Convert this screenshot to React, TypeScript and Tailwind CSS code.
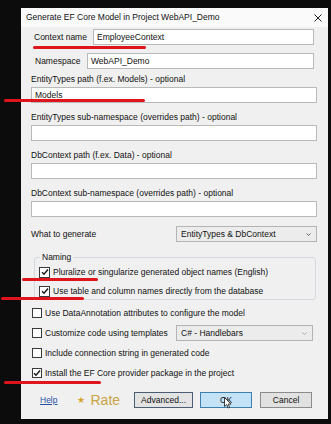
import React from "react";

const font = { fontFamily: '"Liberation Sans", Arial, sans-serif' };

function Input({ value, className = "" }: { value?: string; className?: string }) {
  return (
    <div className={`h-[16px] bg-white border border-[#b9b9b9] flex items-center pl-[3px] text-[8.5px] text-[#111] ${className}`}>
      {value}
    </div>
  );
}

function Check({ checked, size = 10 }: { checked?: boolean; size?: number }) {
  return (
    <div
      className={`${size === 11 ? "w-[11px] h-[11px]" : "w-[10px] h-[10px]"} shrink-0 bg-white border border-[#3a3a3a] flex items-center justify-center`}
    >
      {checked && (
        <svg width="8" height="8" viewBox="0 0 8 8">
          <path d="M1 4.2 L3 6.3 L7 1.5" fill="none" stroke="#1a1a1a" strokeWidth="1.4" />
        </svg>
      )}
    </div>
  );
}

function Select({ value, className = "", disabled }: { value: string; className?: string; disabled?: boolean }) {
  return (
    <div
      className={`h-[16px] border border-[#b4b4b4] bg-[#ececec] flex items-center justify-between pl-[4px] pr-[5px] text-[8.5px] text-[#111] ${className}`}
    >
      <span>{value}</span>
      <svg width="5" height="3" viewBox="0 0 5 3">
        <path d="M0.5 0.5 L2.5 2.5 L4.5 0.5" fill="none" stroke={disabled ? "#a0a0a0" : "#555"} strokeWidth="0.9" />
      </svg>
    </div>
  );
}

function Field({ label }: { label: string }) {
  return (
    <div className="flex flex-col mt-[9px]">
      <div className="h-[10px] leading-[10px] text-[8.5px] text-[#111]">{label}</div>
      <Input className="mt-[3px]" />
    </div>
  );
}

function Red({ className }: { className: string }) {
  return <div className={`absolute h-[3px] rounded-full bg-[#e0141c] ${className}`} />;
}

export default function App() {
  return (
    <div className="relative w-[331px] h-[424px] overflow-hidden bg-[#0c0c0c] pt-[8px] pl-[21px]" style={font}>
      <div className="w-[307px] h-[411px] bg-[#f0f0f0] flex flex-col">
        {/* title bar */}
        <div className="h-[19px] bg-[#fafafa] flex items-center justify-between pl-[5px] pr-[6px]">
          <span className="text-[8.5px] text-[#111]">Generate EF Core Model in Project WebAPI_Demo</span>
          <svg width="8" height="8" viewBox="0 0 8 8">
            <path d="M0.5 0.5 L7.5 7.5 M7.5 0.5 L0.5 7.5" stroke="#222" strokeWidth="1" />
          </svg>
        </div>

        <div className="flex flex-col pl-[10px] pr-[11px]">
          {/* Context name */}
          <div className="mt-[2px] flex items-center">
            <div className="ml-[3px] w-[59px] text-[8.5px] text-[#111]">Context name</div>
            <Input value="EmployeeContext" className="flex-1 mr-[3px]" />
          </div>
          {/* Namespace */}
          <div className="mt-[8px] flex items-center">
            <div className="ml-[4px] w-[52px] text-[8.5px] text-[#111]">Namespace</div>
            <Input value="WebAPI_Demo" className="flex-1 mr-[3px]" />
          </div>

          <div className="flex flex-col mt-[5px]">
            <div className="h-[10px] leading-[10px] text-[8.5px] text-[#111]">EntityTypes path (f.ex. Models) - optional</div>
            <Input value="Models" className="mt-[3px]" />
          </div>
          <Field label="EntityTypes sub-namespace (overrides path) - optional" />
          <Field label="DbContext path (f.ex. Data) - optional" />
          <Field label="DbContext sub-namespace (overrides path) - optional" />

          {/* What to generate */}
          <div className="mt-[9px] flex items-center justify-between">
            <span className="text-[8.5px] text-[#111]">What to generate</span>
            <Select value="EntityTypes & DbContext" className="w-[141px]" />
          </div>

          {/* Naming group */}
          <fieldset className="mt-[10px] ml-[3px] mr-[1px] border border-[#d3d9de] rounded-[3px] pl-[4px] pb-[2px]">
            <legend className="ml-[1px] px-[2px] h-[10px] leading-[10px] text-[8.5px] text-[#111]">Naming</legend>
            <div className="mt-[4px] h-[12px] flex items-center gap-[3px]">
              <Check checked size={11} />
              <span className="text-[8.5px] text-[#111]">Pluralize or singularize generated object names (English)</span>
            </div>
            <div className="mt-[7px] h-[12px] flex items-center gap-[3px]">
              <Check checked size={11} />
              <span className="text-[8.5px] text-[#111]">Use table and column names directly from the database</span>
            </div>
          </fieldset>

          <div className="mt-[7px] ml-[1px] h-[12px] flex items-center gap-[3px]">
            <Check />
            <span className="text-[8.5px] text-[#111]">Use DataAnnotation attributes to configure the model</span>
          </div>
          <div className="mt-[6px] ml-[1px] h-[16px] flex items-center">
            <div className="w-[144px] flex items-center gap-[3px]">
              <Check />
              <span className="text-[8.5px] text-[#111]">Customize code using templates</span>
            </div>
            <Select value="C# - Handlebars" disabled className="w-[137px]" />
          </div>
          <div className="mt-[6px] ml-[1px] h-[12px] flex items-center gap-[3px]">
            <Check />
            <span className="text-[8.5px] text-[#111]">Include connection string in generated code</span>
          </div>
          <div className="mt-[8px] ml-[1px] h-[12px] flex items-center gap-[3px]">
            <Check checked />
            <span className="text-[8.5px] text-[#111]">Install the EF Core provider package in the project</span>
          </div>

          {/* buttons */}
          <div className="mt-[13px] h-[16px] flex items-center">
            <span className="ml-[9px] text-[8.5px] text-[#2452a6] underline">Help</span>
            <span className="ml-[20px] text-[9px] text-[#d6a62c] leading-none">★</span>
            <span className="ml-[5px] text-[14px] leading-none text-[#c9a446] font-medium">Rate</span>
            <div className="ml-[14px] w-[59px] h-[16px] border border-[#4a5d72] bg-[#e3e3e3] flex items-center justify-center text-[8.5px] text-[#111]">
              Advanced...
            </div>
            <div className="ml-[7px] w-[52px] h-[16px] border border-[#3c7fb1] bg-[#c4e2f5] flex items-center justify-center text-[8.5px] text-[#111]">
              OK
            </div>
            <div className="ml-[8px] w-[52px] h-[16px] border border-[#8c8c8c] bg-[#e1e1e1] flex items-center justify-center text-[8.5px] text-[#111]">
              Cancel
            </div>
          </div>
        </div>
      </div>

      {/* red annotation lines */}
      <Red className="left-[33px] top-[46px] w-[113px]" />
      <Red className="left-[4px] top-[99px] w-[141px]" />
      <Red className="left-[22px] top-[278px] w-[76px]" />
      <Red className="left-[1px] top-[297px] w-[83px]" />
      <Red className="left-[4px] top-[381px] w-[97px]" />

      {/* mouse cursor (arrow) */}
      <svg className="absolute left-[224px] top-[397px]" width="8" height="12" viewBox="0 0 8 12">
        <path d="M0.5 0.5 L0.5 9.5 L2.7 7.6 L4.2 11 L5.6 10.4 L4.1 7.1 L7 7.1 Z" fill="#fff" stroke="#111" strokeWidth="0.8" />
      </svg>
    </div>
  );
}
